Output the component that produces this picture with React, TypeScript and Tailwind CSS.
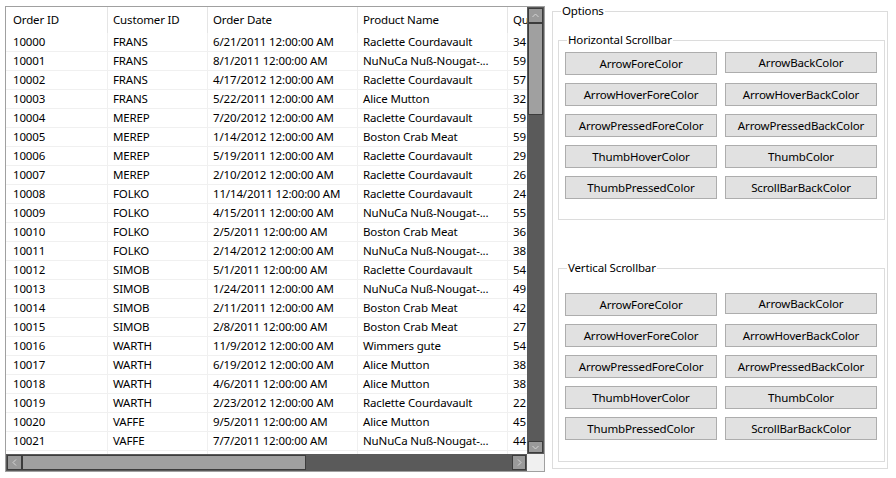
import React from 'react';

type Row = [string, string, string, string, string];

const rows: Row[] = [
    ['10000', 'FRANS', '6/21/2011 12:00:00 AM', 'Raclette Courdavault', '34'],
    ['10001', 'FRANS', '8/1/2011 12:00:00 AM', 'NuNuCa Nuß-Nougat-...', '59'],
    ['10002', 'FRANS', '4/17/2012 12:00:00 AM', 'Raclette Courdavault', '57'],
    ['10003', 'FRANS', '5/22/2011 12:00:00 AM', 'Alice Mutton', '32'],
    ['10004', 'MEREP', '7/20/2012 12:00:00 AM', 'Raclette Courdavault', '59'],
    ['10005', 'MEREP', '1/14/2012 12:00:00 AM', 'Boston Crab Meat', '59'],
    ['10006', 'MEREP', '5/19/2011 12:00:00 AM', 'Raclette Courdavault', '29'],
    ['10007', 'MEREP', '2/10/2012 12:00:00 AM', 'Raclette Courdavault', '26'],
    ['10008', 'FOLKO', '11/14/2011 12:00:00 AM', 'Raclette Courdavault', '24'],
    ['10009', 'FOLKO', '4/15/2011 12:00:00 AM', 'NuNuCa Nuß-Nougat-...', '55'],
    ['10010', 'FOLKO', '2/5/2011 12:00:00 AM', 'Boston Crab Meat', '36'],
    ['10011', 'FOLKO', '2/14/2012 12:00:00 AM', 'NuNuCa Nuß-Nougat-...', '38'],
    ['10012', 'SIMOB', '5/1/2011 12:00:00 AM', 'Raclette Courdavault', '54'],
    ['10013', 'SIMOB', '1/24/2011 12:00:00 AM', 'NuNuCa Nuß-Nougat-...', '49'],
    ['10014', 'SIMOB', '2/11/2011 12:00:00 AM', 'Boston Crab Meat', '42'],
    ['10015', 'SIMOB', '2/8/2011 12:00:00 AM', 'Boston Crab Meat', '27'],
    ['10016', 'WARTH', '11/9/2012 12:00:00 AM', 'Wimmers gute', '54'],
    ['10017', 'WARTH', '6/19/2012 12:00:00 AM', 'Alice Mutton', '38'],
    ['10018', 'WARTH', '4/6/2011 12:00:00 AM', 'Alice Mutton', '38'],
    ['10019', 'WARTH', '2/23/2012 12:00:00 AM', 'Raclette Courdavault', '22'],
    ['10020', 'VAFFE', '9/5/2011 12:00:00 AM', 'Alice Mutton', '45'],
    ['10021', 'VAFFE', '7/7/2011 12:00:00 AM', 'NuNuCa Nuß-Nougat-...', '44'],
];

const headers = ['Order ID', 'Customer ID', 'Order Date', 'Product Name', 'Quantity'];

// cell widths include the right grid line
const cellCls = [
    'w-[102px] pl-[7px]',
    'w-[100px] pl-[5px]',
    'w-[150px] pl-[5px]',
    'w-[150px] pl-[5px]',
    'w-[100px] pl-[5px]',
];

const buttonLabels = [
    'ArrowForeColor', 'ArrowBackColor',
    'ArrowHoverForeColor', 'ArrowHoverBackColor',
    'ArrowPressedForeColor', 'ArrowPressedBackColor',
    'ThumbHoverColor', 'ThumbColor',
    'ThumbPressedColor', 'ScrollBarBackColor',
];

const Chevron: React.FC<{ dir: 'up' | 'down' | 'left' | 'right' }> = ({ dir }) => {
    const pts = {
        up: '1.5,5 4.5,2 7.5,5',
        down: '1.5,2 4.5,5 7.5,2',
        left: '5,1.5 2,4.5 5,7.5',
        right: '2,1.5 5,4.5 2,7.5',
    }[dir];
    const vertical = dir === 'up' || dir === 'down';
    return (
        <svg width={vertical ? 9 : 7} height={vertical ? 7 : 9} viewBox={vertical ? '0 0 9 7' : '0 0 7 9'}>
            <polyline points={pts} fill="none" stroke="#d4d4d4" strokeWidth="1" />
        </svg>
    );
};

const ColorButtons: React.FC = () => (
    <div className="grid grid-cols-[152px_152px] gap-x-[8px] gap-y-[8px] items-start pl-[6px]">
        {buttonLabels.map((label, i) => (
            <button
                key={label}
                className={`${i === 1 ? 'h-[21px]' : 'h-[23px]'} border border-[#adadad] bg-[#e1e1e1] text-[11.5px] tracking-[-0.15px] leading-none text-black flex items-center justify-center`}
            >
                {label}
            </button>
        ))}
    </div>
);

export default function App() {
    return (
        <div className="w-[896px] h-[478px] bg-white flex items-start font-['Noto_Sans',sans-serif] text-[11.5px] tracking-[-0.15px] text-black overflow-hidden">
            {/* data grid */}
            <div className="ml-[5px] mt-[6px] w-[540px] h-[466px] border border-[#a0a0a0] flex flex-col">
                <div className="flex h-[447px]">
                    <div className="flex-1 overflow-hidden">
                        <div className="flex h-[26px]">
                            {headers.map((h, i) => (
                                <div key={h} className={`${cellCls[i]} shrink-0 flex items-center whitespace-nowrap overflow-hidden border-r border-[#e5e5e5]`}>
                                    {h}
                                </div>
                            ))}
                        </div>
                        {[...rows, ['', '', '', '', ''] as Row].map((r, ri) => (
                            <div key={ri} className="flex h-[19px] border-b border-[#f0f0f0]">
                                {r.map((c, ci) => (
                                    <div key={ci} className={`${cellCls[ci]} shrink-0 flex items-center whitespace-nowrap overflow-hidden border-r border-[#f0f0f0]`}>
                                        {c}
                                    </div>
                                ))}
                            </div>
                        ))}
                    </div>
                    {/* vertical scrollbar */}
                    <div className="w-[17px] bg-[#5a5a5a] flex flex-col p-[1px]">
                        <div className="h-[15px] bg-[#9a9a9a] border border-[#3c3c3c] flex items-center justify-center">
                            <Chevron dir="up" />
                        </div>
                        <div className="h-[92px] bg-[#a0a0a0] border border-[#3c3c3c]" />
                        <div className="flex-1" />
                        <div className="h-[12px] bg-[#9a9a9a] border border-[#3c3c3c] flex items-center justify-center">
                            <Chevron dir="down" />
                        </div>
                    </div>
                </div>
                <div className="flex h-[17px]">
                    {/* horizontal scrollbar */}
                    <div className="flex-1 bg-[#5a5a5a] flex p-[1px]">
                        <div className="w-[15px] bg-[#9a9a9a] border border-[#3c3c3c] flex items-center justify-center">
                            <Chevron dir="left" />
                        </div>
                        <div className="w-[284px] bg-[#a0a0a0] border border-[#3c3c3c]" />
                        <div className="flex-1" />
                        <div className="w-[14px] bg-[#9a9a9a] border border-[#3c3c3c] flex items-center justify-center">
                            <Chevron dir="right" />
                        </div>
                    </div>
                    <div className="w-[17px] bg-[#f0f0f0]" />
                </div>
            </div>

            {/* options panel */}
            <fieldset className="ml-[7px] mt-[3px] w-[336px] h-[466px] border border-[#dcdcdc]">
                <legend className="ml-[8px] px-[1px] leading-[16px]">Options</legend>
                <fieldset className="ml-[5px] mt-[13px] w-[327px] h-[188px] border border-[#dcdcdc]">
                    <legend className="ml-[8px] px-[1px] leading-[16px]">Horizontal Scrollbar</legend>
                    <div className="pt-[4px]">
                        <ColorButtons />
                    </div>
                </fieldset>
                <fieldset className="ml-[5px] mt-[40px] w-[327px] h-[202px] border border-[#dcdcdc]">
                    <legend className="ml-[8px] px-[1px] leading-[16px]">Vertical Scrollbar</legend>
                    <div className="pt-[17px]">
                        <ColorButtons />
                    </div>
                </fieldset>
            </fieldset>
        </div>
    );
}
